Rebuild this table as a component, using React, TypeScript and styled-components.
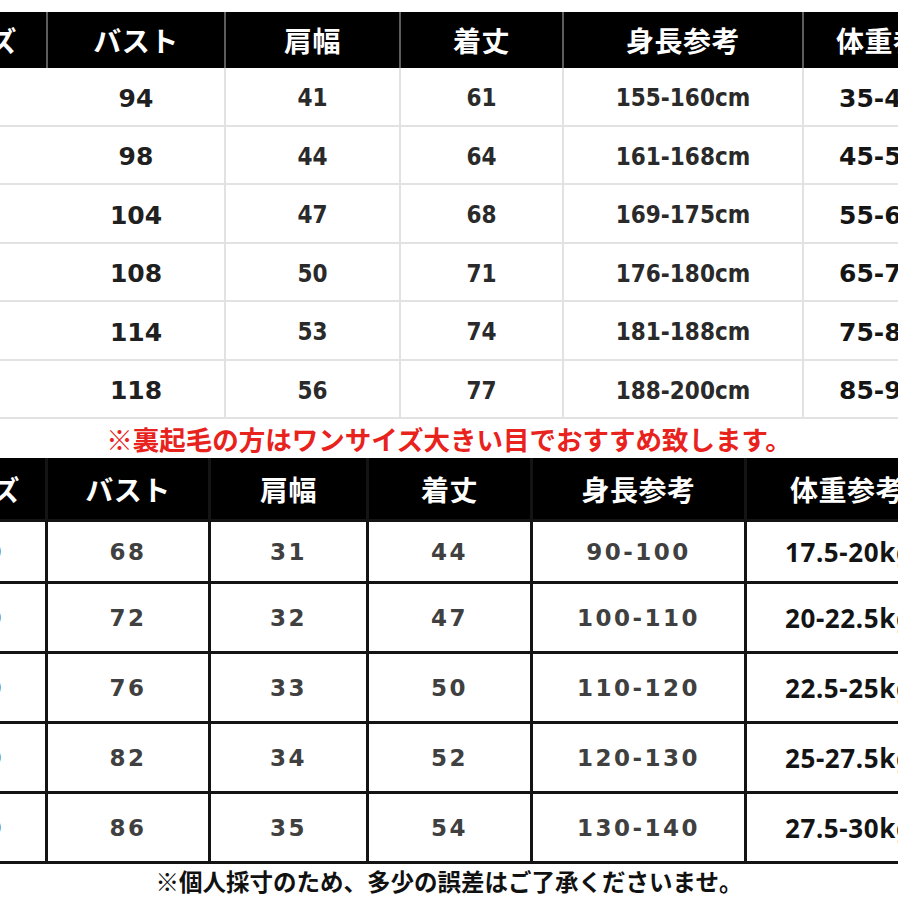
import React from "react";
import styled, { createGlobalStyle } from "styled-components";

const GlobalStyle = createGlobalStyle`
  html, body {
    margin: 0;
    padding: 0;
    background: #ffffff;
  }
  body {
    font-family: "Noto Sans CJK JP", "Noto Sans", sans-serif;
  }
`;

const CJK = `"Noto Sans CJK JP", "Noto Sans", sans-serif`;

type Align = "start" | "center" | "end";

const Page = styled.div`
  width: 898px;
  height: 898px;
  overflow: hidden;
  background: #ffffff;
  display: flex;
  flex-direction: column;
  padding-top: 12px;
  box-sizing: border-box;
`;

const TOP_COLS = "46px 176px 173px 161px 238px 1fr";
const BOTTOM_COLS = "45px 160px 155px 161px 211px 1fr";

const TopHeader = styled.div`
  display: grid;
  grid-template-columns: ${TOP_COLS};
  grid-template-rows: 56px;
  column-gap: 2px;
  background: #5c5c5c;
`;

const TopBody = styled.div`
  display: grid;
  grid-template-columns: ${TOP_COLS};
  grid-template-rows: repeat(6, 56.5px);
  gap: 2px;
  padding-bottom: 2px;
  background: #e2e2e2;
`;

const BottomTable = styled.div`
  display: grid;
  grid-template-columns: ${BOTTOM_COLS};
  grid-template-rows: 61px 59px repeat(4, 67px);
  gap: 3px;
  padding-bottom: 3px;
  background: #141414;
`;

const Cell = styled.div<{ $align: Align; $pad?: number }>`
  display: flex;
  align-items: center;
  justify-content: ${(p) =>
    p.$align === "start" ? "flex-start" : p.$align === "end" ? "flex-end" : "center"};
  padding-left: ${(p) => (p.$align === "start" ? `${p.$pad ?? 0}px` : "0")};
  padding-right: ${(p) => (p.$align === "end" ? `${p.$pad ?? 0}px` : "0")};
  overflow: hidden;
  white-space: nowrap;
  box-sizing: border-box;
  min-width: 0;
`;

const HeadCell = styled(Cell)`
  background: #000000;
  color: #ffffff;
  font-family: ${CJK};
  font-weight: 700;
  font-size: 28px;
  letter-spacing: 0.5px;
`;

type Variant = "wide" | "narrow" | "heavy" | "kid" | "kidBold";

const fontFor = (v: Variant) => {
  switch (v) {
    case "wide":
      return `font-family: "DejaVu Sans", sans-serif; font-weight: 700; font-size: 25px; color: #202020; padding-top: 4px;`;
    case "narrow":
      return `font-family: "DejaVu Sans Condensed", "DejaVu Sans", sans-serif; font-stretch: condensed; font-weight: 700; font-size: 24px; color: #2a2a2a; padding-top: 4px;`;
    case "heavy":
      return `font-family: "DejaVu Sans", sans-serif; font-weight: 700; font-size: 25px; color: #151515; padding-top: 4px;`;
    case "kid":
      return `font-family: "DejaVu Sans", sans-serif; font-weight: 700; font-size: 23px; letter-spacing: 2.5px; color: #404040;`;
    case "kidBold":
      return `font-family: "Noto Sans", sans-serif; font-weight: 700; font-size: 26px; letter-spacing: 0.6px; color: #141414;`;
  }
};

const DataCell = styled(Cell)<{ $variant: Variant }>`
  background: #ffffff;
  ${(p) => fontFor(p.$variant)}
`;

const Note = styled.div<{ $color: string; $size: number; $height: number }>`
  height: ${(p) => p.$height}px;
  display: flex;
  align-items: center;
  justify-content: center;
  font-family: ${CJK};
  font-weight: 700;
  font-size: ${(p) => p.$size}px;
  color: ${(p) => p.$color};
  white-space: nowrap;
`;

const headers = ["サイズ", "バスト", "肩幅", "着丈", "身長参考", "体重参考"];

const adult = [
  ["94", "41", "61", "155-160cm", "35-45kg"],
  ["98", "44", "64", "161-168cm", "45-55kg"],
  ["104", "47", "68", "169-175cm", "55-65kg"],
  ["108", "50", "71", "176-180cm", "65-75kg"],
  ["114", "53", "74", "181-188cm", "75-85kg"],
  ["118", "56", "77", "188-200cm", "85-95kg"],
];

const kids = [
  ["90", "68", "31", "44", "90-100", "17.5-20kg"],
  ["100", "72", "32", "47", "100-110", "20-22.5kg"],
  ["110", "76", "33", "50", "110-120", "22.5-25kg"],
  ["120", "82", "34", "52", "120-130", "25-27.5kg"],
  ["130", "86", "35", "54", "130-140", "27.5-30kg"],
];

export default function App() {
  return (
    <>
      <GlobalStyle />
      <Page>
        <TopHeader>
          {headers.map((h, i) => (
            <HeadCell
              key={h}
              $align={i === 0 ? "end" : i === 5 ? "start" : "center"}
              $pad={i === 0 ? 29 : i === 5 ? 32 : 0}
            >
              {h}
            </HeadCell>
          ))}
        </TopHeader>
        <TopBody>
          {adult.map((row, r) => (
            <React.Fragment key={r}>
              <DataCell $align="end" $variant="wide" $pad={60} />
              <DataCell $align="center" $variant="wide">{row[0]}</DataCell>
              <DataCell $align="center" $variant="narrow">{row[1]}</DataCell>
              <DataCell $align="center" $variant="narrow">{row[2]}</DataCell>
              <DataCell $align="center" $variant="narrow">{row[3]}</DataCell>
              <DataCell $align="start" $variant="heavy" $pad={35}>{row[4]}</DataCell>
            </React.Fragment>
          ))}
        </TopBody>
        <Note $color="#e8221c" $size={26.5} $height={39}>
          ※裏起毛の方はワンサイズ大きい目でおすすめ致します。
        </Note>
        <BottomTable>
          {headers.map((h, i) => (
            <HeadCell
              key={h}
              $align={i === 0 ? "end" : i === 5 ? "start" : "center"}
              $pad={i === 0 ? 25 : i === 5 ? 43 : 0}
            >
              {h}
            </HeadCell>
          ))}
          {kids.map((row, r) => (
            <React.Fragment key={r}>
              <DataCell $align="end" $variant="kid" $pad={41}>{row[0]}</DataCell>
              <DataCell $align="center" $variant="kid">{row[1]}</DataCell>
              <DataCell $align="center" $variant="kid">{row[2]}</DataCell>
              <DataCell $align="center" $variant="kid">{row[3]}</DataCell>
              <DataCell $align="center" $variant="kid">{row[4]}</DataCell>
              <DataCell $align="start" $variant="kidBold" $pad={38}>{row[5]}</DataCell>
            </React.Fragment>
          ))}
        </BottomTable>
        <Note $color="#111111" $size={23.5} $height={35}>
          ※個人採寸のため、多少の誤差はご了承くださいませ。
        </Note>
      </Page>
    </>
  );
}
